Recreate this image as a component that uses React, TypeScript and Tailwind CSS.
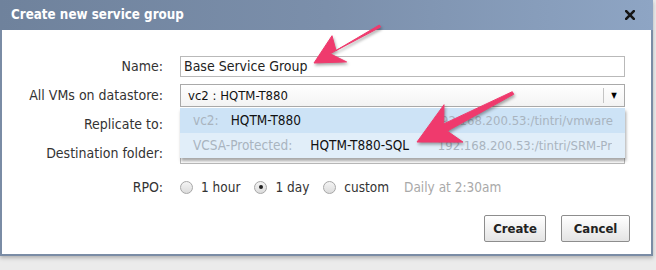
import React from 'react';

const font = { fontFamily: '"DejaVu Sans Condensed", "DejaVu Sans", Verdana, sans-serif' };

const Arrow: React.FC<{ points: string }> = ({ points }) => (
  <polygon points={points} fill="#ef3a6d" stroke="#ef3a6d" strokeWidth="1" strokeLinejoin="round" />
);

const Radio: React.FC<{ checked?: boolean; label: string }> = ({ checked, label }) => (
  <label className="flex items-center gap-[8px]">
    <span className="w-[13px] h-[13px] rounded-full border border-[#a7a7a7] bg-gradient-to-b from-[#f4f4f4] to-[#dcdcdc] flex items-center justify-center">
      {checked && <span className="w-[4px] h-[4px] rounded-full bg-[#222]" />}
    </span>
    <span className="text-[#333]">{label}</span>
  </label>
);

export default function App() {
  return (
    <div className="relative w-[656px] h-[270px] overflow-hidden bg-[#ebebeb] text-[14px]" style={font}>
      <div className="w-[653px] h-[256px] border-2 border-t-0 border-[#7a8ca5] bg-white shadow-[0_2px_4px_rgba(0,0,0,0.25)]">
        {/* title bar */}
        <div className="h-[30px] -mx-[2px] flex items-center justify-between pl-[11px] pr-[18px] bg-gradient-to-r from-[#6f829c] via-[#7b8fab] to-[#8ea5c4]">
          <span className="text-white font-bold text-[13.3px]">Create new service group</span>
          <svg width="10" height="10" viewBox="0 0 10 10">
            <path d="M1.2 1.2 L8.8 8.8 M8.8 1.2 L1.2 8.8" stroke="#161616" strokeWidth="2.6" strokeLinecap="square" />
          </svg>
        </div>

        {/* form */}
        <div className="relative pt-[26px]">
          <div className="grid grid-cols-[161px_445px] gap-x-[17px] items-center text-[#333]">
            <span className="text-right h-[21px] leading-[21px]">Name:</span>
            <div className="h-[21px] border border-[#b9b9b9] px-[3px] leading-[19px] text-[#222]">Base Service Group</div>

            <span className="text-right mt-[7px] leading-[23px]">All VMs on datastore:</span>
            <div className="mt-[7px] h-[23px] border border-[#a9a9a9] bg-gradient-to-b from-white to-[#f3f3f3] flex items-center pl-[7px] text-[13px] text-[#111]">
              <span className="flex-1">vc2 : HQTM-T880</span>
              <span className="w-px h-[15px] bg-[#c4c4c4]" />
              <span className="w-[20px] text-center text-[8px] text-black">▼</span>
            </div>

            <span className="text-right mt-[6px] leading-[22px]">Replicate to:</span>
            <div className="mt-[6px] h-[22px] border border-[#b9b9b9]" />

            <span className="text-right mt-[7px] leading-[22px]">Destination folder:</span>
            <div className="mt-[7px] h-[22px] border border-[#b9b9b9]" />

            <span className="text-right mt-[14px] leading-[18px]">RPO:</span>
            <div className="mt-[14px] h-[18px] flex items-center gap-[14px] text-[13.5px]">
              <Radio label="1 hour" />
              <Radio checked label="1 day" />
              <Radio label="custom" />
              <span className="ml-[1px] text-[#a9a9a9]">Daily at 2:30am</span>
            </div>
          </div>

          <div className="flex justify-end gap-[15px] mt-[19px] mr-[21px]">
            <button className="w-[62px] h-[27px] border border-[#8d8d8d] rounded-[2px] bg-gradient-to-b from-white to-[#e4e4e4] font-bold text-[13px] text-[#222]">Create</button>
            <button className="w-[69px] h-[27px] border border-[#8d8d8d] rounded-[2px] bg-gradient-to-b from-white to-[#e4e4e4] font-bold text-[13px] text-[#222]">Cancel</button>
          </div>

          {/* dropdown menu */}
          <div className="absolute left-[178px] top-[78px] w-[445px] shadow-[1px_3px_3px_rgba(0,0,0,0.35)] bg-white text-[13.5px]">
            <div className="h-[25px] bg-[#cde3f6] flex items-center pl-[13px] pr-[12px] whitespace-nowrap">
              <span className="text-[#a9b4bf]">vc2:</span>
              <span className="ml-[12px] text-[#111]">HQTM-T880</span>
              <span className="ml-auto overflow-hidden pl-[12px] text-[13px] text-[#a9b4bf]">192.168.200.53:/tintri/vmware</span>
            </div>
            <div className="h-[25px] bg-[#e1eef9] flex items-center pl-[13px] pr-[13px] whitespace-nowrap">
              <span className="text-[#a9b4bf]">VCSA-Protected:</span>
              <span className="ml-[18px] text-[#111]">HQTM-T880-SQL</span>
              <span className="ml-auto overflow-hidden pl-[22px] text-[13px] text-[#a9b4bf]">192.168.200.53:/tintri/SRM-Pr</span>
            </div>
          </div>
        </div>
      </div>

      {/* annotation arrows */}
      <svg className="absolute inset-0 pointer-events-none" width="656" height="270" style={{ filter: 'drop-shadow(1px 2px 1.5px rgba(0,0,0,0.35))' }}>
        <Arrow points="314,63 332,35.7 336,50.6 380.6,27 379.4,25 330.3,53.8 346.6,61.9" />
        <Arrow points="417,142 444,104.7 443.7,123.9 512.3,91.7 513.7,94.3 447.3,131.1 463,142.1" />
      </svg>
    </div>
  );
}
